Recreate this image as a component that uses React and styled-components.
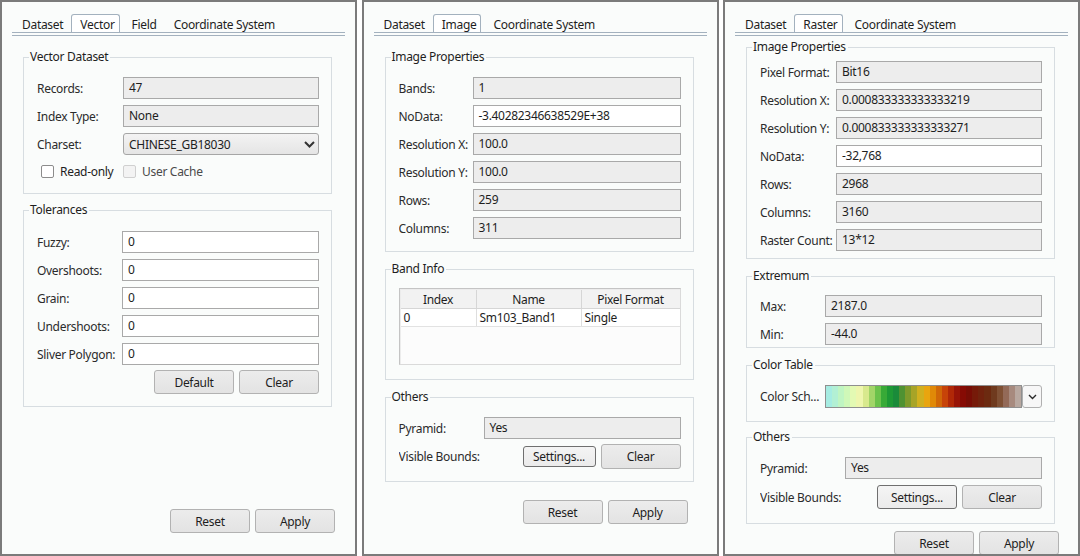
import styled, { createGlobalStyle } from 'styled-components';

const GlobalStyle = createGlobalStyle`
  html, body {
    margin: 0;
    padding: 0;
    background: #ffffff;
  }
  body {
    font-family: 'Noto Sans', 'Open Sans', sans-serif;
    font-size: 12px;
    letter-spacing: -0.3px;
    color: #1e1e1e;
  }
`;

const RAMP = [
  '#a6ece2', '#b2f0d4', '#bff5c2', '#cff8b8', '#e3fab3', '#eef6ae', '#d8e98d', '#a2d568',
  '#6bc24b', '#38aa37', '#1e9935', '#1a8b3a', '#4f9232', '#7e9a2b', '#a7a427', '#d1b01f',
  '#e9a50f', '#e08907', '#d06707', '#c74308', '#b02807', '#971407', '#860b04', '#780d05',
  '#761a09', '#71220d', '#6c2a10', '#6f3a1e', '#7f5034', '#936a58', '#a78a7e', '#b8a8a0',
];

export default function App() {
  return (
    <>
      <GlobalStyle />
      <Page>
        <Panel>
          <TabStrip>
            <Tab>Dataset</Tab>
            <Tab $active>Vector</Tab>
            <Tab>Field</Tab>
            <Tab>Coordinate System</Tab>
          </TabStrip>
          <Body>
            <Group $mt={13} $pt={12} $pb={14}>
              <legend>Vector Dataset</legend>
              <Row $label={86}><Label>Records:</Label><Field>47</Field></Row>
              <Row $label={86}><Label>Index Type:</Label><Field>None</Field></Row>
              <Row $label={86}>
                <Label>Charset:</Label>
                <Combo>
                  CHINESE_GB18030
                  <svg width="11" height="7" viewBox="0 0 11 7">
                    <path d="M1 1 L5.5 5.5 L10 1" fill="none" stroke="#333333" strokeWidth="2" />
                  </svg>
                </Combo>
              </Row>
              <CheckRow $label={86}>
                <Check><Box />Read-only</Check>
                <Check $disabled><Box $disabled />User Cache</Check>
              </CheckRow>
            </Group>

            <Group $mt={8} $pt={13} $pb={12}>
              <legend>Tolerances</legend>
              {['Fuzzy:', 'Overshoots:', 'Grain:', 'Undershoots:', 'Sliver Polygon:'].map((l) => (
                <Row key={l} $label={85}><Label>{l}</Label><Field $editable>0</Field></Row>
              ))}
              <Buttons $mt={-1}>
                <Button>Default</Button>
                <Button>Clear</Button>
              </Buttons>
            </Group>
          </Body>
          <Footer $mt={102} $pr={20}>
            <Button>Reset</Button>
            <Button>Apply</Button>
          </Footer>
        </Panel>

        <Panel>
          <TabStrip>
            <Tab>Dataset</Tab>
            <Tab $active>Image</Tab>
            <Tab>Coordinate System</Tab>
          </TabStrip>
          <Body>
            <Group $mt={13} $pt={12} $pb={12}>
              <legend>Image Properties</legend>
              <Row $label={74}><Label>Bands:</Label><Field>1</Field></Row>
              <Row $label={74}><Label>NoData:</Label><Field $editable>-3.40282346638529E+38</Field></Row>
              <Row $label={74}><Label>Resolution X:</Label><Field>100.0</Field></Row>
              <Row $label={74}><Label>Resolution Y:</Label><Field>100.0</Field></Row>
              <Row $label={74}><Label>Rows:</Label><Field>259</Field></Row>
              <Row $label={74}><Label>Columns:</Label><Field>311</Field></Row>
            </Group>

            <Group $mt={9} $pt={11} $pb={14}>
              <legend>Band Info</legend>
              <TableFrame>
                <Grid>
                  <thead>
                    <tr>
                      <Th $w={75}>Index</Th>
                      <Th $w={104}>Name</Th>
                      <Th>Pixel Format</Th>
                    </tr>
                  </thead>
                  <tbody>
                    <tr>
                      <Td>0</Td>
                      <Td>Sm103_Band1</Td>
                      <Td>Single</Td>
                    </tr>
                  </tbody>
                </Grid>
              </TableFrame>
            </Group>

            <Group $mt={9} $pt={12} $pb={12}>
              <legend>Others</legend>
              <Row $label={85}><Label>Pyramid:</Label><Field>Yes</Field></Row>
              <Row $label={85} $h={25} $mt={-1}>
                <Label>Visible Bounds:</Label>
                <Buttons>
                  <Button $w={73} $h={21} $focus>Settings...</Button>
                  <Button $h={25}>Clear</Button>
                </Buttons>
              </Row>
            </Group>
          </Body>
          <Footer $mt={18} $pr={29}>
            <Button>Reset</Button>
            <Button>Apply</Button>
          </Footer>
        </Panel>

        <Panel>
          <TabStrip>
            <Tab>Dataset</Tab>
            <Tab $active>Raster</Tab>
            <Tab>Coordinate System</Tab>
          </TabStrip>
          <Body>
            <Group $mt={3} $pt={6} $pb={7}>
              <legend>Image Properties</legend>
              <Row $label={76}><Label>Pixel Format:</Label><Field>Bit16</Field></Row>
              <Row $label={76}><Label>Resolution X:</Label><Field>0.000833333333333219</Field></Row>
              <Row $label={76}><Label>Resolution Y:</Label><Field>0.000833333333333271</Field></Row>
              <Row $label={76}><Label>NoData:</Label><Field $editable>-32,768</Field></Row>
              <Row $label={76}><Label>Rows:</Label><Field>2968</Field></Row>
              <Row $label={76}><Label>Columns:</Label><Field>3160</Field></Row>
              <Row $label={76}><Label>Raster Count:</Label><Field>13*12</Field></Row>
            </Group>

            <Group $mt={9} $pt={11} $pb={2}>
              <legend>Extremum</legend>
              <Row $label={65}><Label>Max:</Label><Field>2187.0</Field></Row>
              <Row $label={65}><Label>Min:</Label><Field>-44.0</Field></Row>
            </Group>

            <Group $mt={9} $pt={12} $pb={13}>
              <legend>Color Table</legend>
              <Row $label={65} $h={23}>
                <Label>Color Sch...</Label>
                <RampPicker>
                  <Ramp>
                    {RAMP.map((c, i) => <Swatch key={i} $color={c} />)}
                  </Ramp>
                  <DropButton>
                    <svg width="9" height="6" viewBox="0 0 9 6">
                      <path d="M1 1 L4.5 4.5 L8 1" fill="none" stroke="#2a2a2a" strokeWidth="1.4" />
                    </svg>
                  </DropButton>
                </RampPicker>
              </Row>
            </Group>

            <Group $mt={7} $pt={12} $pb={14}>
              <legend>Others</legend>
              <Row $label={85}><Label>Pyramid:</Label><Field>Yes</Field></Row>
              <Row $label={85} $h={24}>
                <Label>Visible Bounds:</Label>
                <Buttons>
                  <Button $w={80} $focus>Settings...</Button>
                  <Button>Clear</Button>
                </Buttons>
              </Row>
            </Group>
          </Body>
          <Footer $mt={7} $pr={19}>
            <Button>Reset</Button>
            <Button>Apply</Button>
          </Footer>
        </Panel>
      </Page>
    </>
  );
}

const Page = styled.div`
  display: flex;
  justify-content: space-between;
  width: 1080px;
  height: 556px;
`;

const Panel = styled.div`
  width: 357px;
  height: 556px;
  box-sizing: border-box;
  border: 2px solid #7b7b7b;
  background: #fafcfb;
  overflow: hidden;
  display: flex;
  flex-direction: column;
  flex-shrink: 0;
`;

const TabStrip = styled.div`
  display: flex;
  align-items: flex-end;
  height: 18px;
  margin: 12px 10px 0 10px;
  padding-left: 1px;
  border-bottom: 4px double #a3b1be;
  flex-shrink: 0;
`;

const Tab = styled.div`
  height: 18px;
  box-sizing: border-box;
  padding: 2px ${(p) => (p.$active ? 4 : 7)}px 0 8px;
  margin-right: ${(p) => (p.$active ? 3 : 0)}px;
  line-height: 16px;
  border: 1px solid ${(p) => (p.$active ? '#a3b1be' : 'transparent')};
  border-bottom: none;
  border-radius: 3px 3px 0 0;
  background: ${(p) => (p.$active ? '#ffffff' : 'transparent')};
  white-space: nowrap;
`;

const Body = styled.div`
  display: flex;
  flex-direction: column;
  padding: 0 23px 0 21px;
  flex-shrink: 0;
`;

const Group = styled.fieldset`
  margin: ${(p) => p.$mt}px 0 0 0;
  padding: ${(p) => p.$pt}px 12px ${(p) => p.$pb}px 13px;
  border: 1px solid #d7dde1;
  min-width: 0;
  display: flex;
  flex-direction: column;
  gap: 6px;

  & > legend {
    margin-left: -8px;
    padding: 0 2px 0 1px;
    line-height: 16px;
    color: #1e1e1e;
  }
`;

const Row = styled.div`
  display: grid;
  grid-template-columns: ${(p) => p.$label}px 1fr;
  align-items: center;
  height: ${(p) => p.$h || 22}px;
  margin-top: ${(p) => p.$mt || 0}px;
`;

const Label = styled.span`
  color: #2b2b2b;
  white-space: nowrap;
  overflow: hidden;
`;

const Field = styled.div`
  height: 22px;
  box-sizing: border-box;
  border: 1px solid #a9a9a9;
  background: ${(p) => (p.$editable ? '#ffffff' : '#ededed')};
  padding: 0 5px;
  line-height: 20px;
  white-space: nowrap;
  overflow: hidden;
`;

const Combo = styled.div`
  height: 22px;
  box-sizing: border-box;
  display: flex;
  align-items: center;
  justify-content: space-between;
  border: 1px solid #a6a6a6;
  border-radius: 3px;
  background: linear-gradient(#f3f3f3, #e5e5e5);
  padding: 0 3px 0 5px;
`;

const CheckRow = styled.div`
  display: grid;
  grid-template-columns: ${(p) => p.$label}px 1fr;
  align-items: center;
  height: 16px;
  margin-top: 2px;
  padding-left: 4px;
  & > :first-child {
    margin-right: -4px;
  }
  & > :last-child {
    margin-left: -4px;
  }
`;

const Check = styled.label`
  display: flex;
  align-items: center;
  gap: 6px;
  color: ${(p) => (p.$disabled ? '#4a4a4a' : '#1e1e1e')};
`;

const Box = styled.span`
  width: 13px;
  height: 13px;
  box-sizing: border-box;
  border: 1px solid ${(p) => (p.$disabled ? '#d0d0d0' : '#8c8c8c')};
  border-radius: 2px;
  background: ${(p) => (p.$disabled ? '#f3f3f3' : '#ffffff')};
`;

const Buttons = styled.div`
  display: flex;
  justify-content: flex-end;
  align-items: center;
  gap: 5px;
  margin-top: ${(p) => p.$mt || 0}px;
`;

const Button = styled.button`
  width: ${(p) => p.$w || 80}px;
  height: ${(p) => p.$h || 24}px;
  box-sizing: border-box;
  padding: 0;
  border: 1px solid ${(p) => (p.$focus ? '#6f6f6f' : '#b2b2b2')};
  border-radius: 3px;
  background: ${(p) => (p.$focus ? 'linear-gradient(#f4f4f4, #ebebeb)' : 'linear-gradient(#ececec, #e3e3e3)')};
  font: inherit;
  letter-spacing: inherit;
  color: #1e1e1e;
`;

const Footer = styled.div`
  display: flex;
  justify-content: flex-end;
  gap: 5px;
  margin-top: ${(p) => p.$mt}px;
  padding-right: ${(p) => p.$pr}px;
  flex-shrink: 0;
`;

const TableFrame = styled.div`
  height: 77px;
  box-sizing: border-box;
  border: 1px solid;
  border-color: #c4c4c4 #dadada #dadada #c4c4c4;
  box-shadow: inset 1px 1px 0 #ececec;
  background: #fcfcfc;
  padding: 1px 0 0 1px;
`;

const Grid = styled.table`
  width: 100%;
  border-collapse: collapse;
  table-layout: fixed;
`;

const Th = styled.th`
  ${(p) => (p.$w ? `width: ${p.$w}px;` : '')}
  height: 18px;
  padding: 0;
  font-weight: normal;
  text-align: center;
  background: #f2f2f2;
  border-right: 1px solid #d6d6d6;
  border-bottom: 1px solid #d6d6d6;
  &:last-child {
    border-right: none;
  }
`;

const Td = styled.td`
  height: 17px;
  padding: 0 3px;
  background: #ffffff;
  border-right: 1px solid #dedede;
  border-bottom: 1px solid #e2e2e2;
  white-space: nowrap;
  &:last-child {
    border-right: none;
  }
`;

const RampPicker = styled.div`
  display: flex;
  height: 23px;
`;

const Ramp = styled.div`
  flex: 1;
  display: flex;
  box-sizing: border-box;
  border: 1px solid #8f8f8f;
`;

const Swatch = styled.span`
  flex: 1;
  background: ${(p) => p.$color};
`;

const DropButton = styled.div`
  width: 20px;
  box-sizing: border-box;
  display: flex;
  align-items: center;
  justify-content: center;
  border: 1px solid #b0b0b0;
  border-radius: 3px;
  background: #f7f7f7;
`;
